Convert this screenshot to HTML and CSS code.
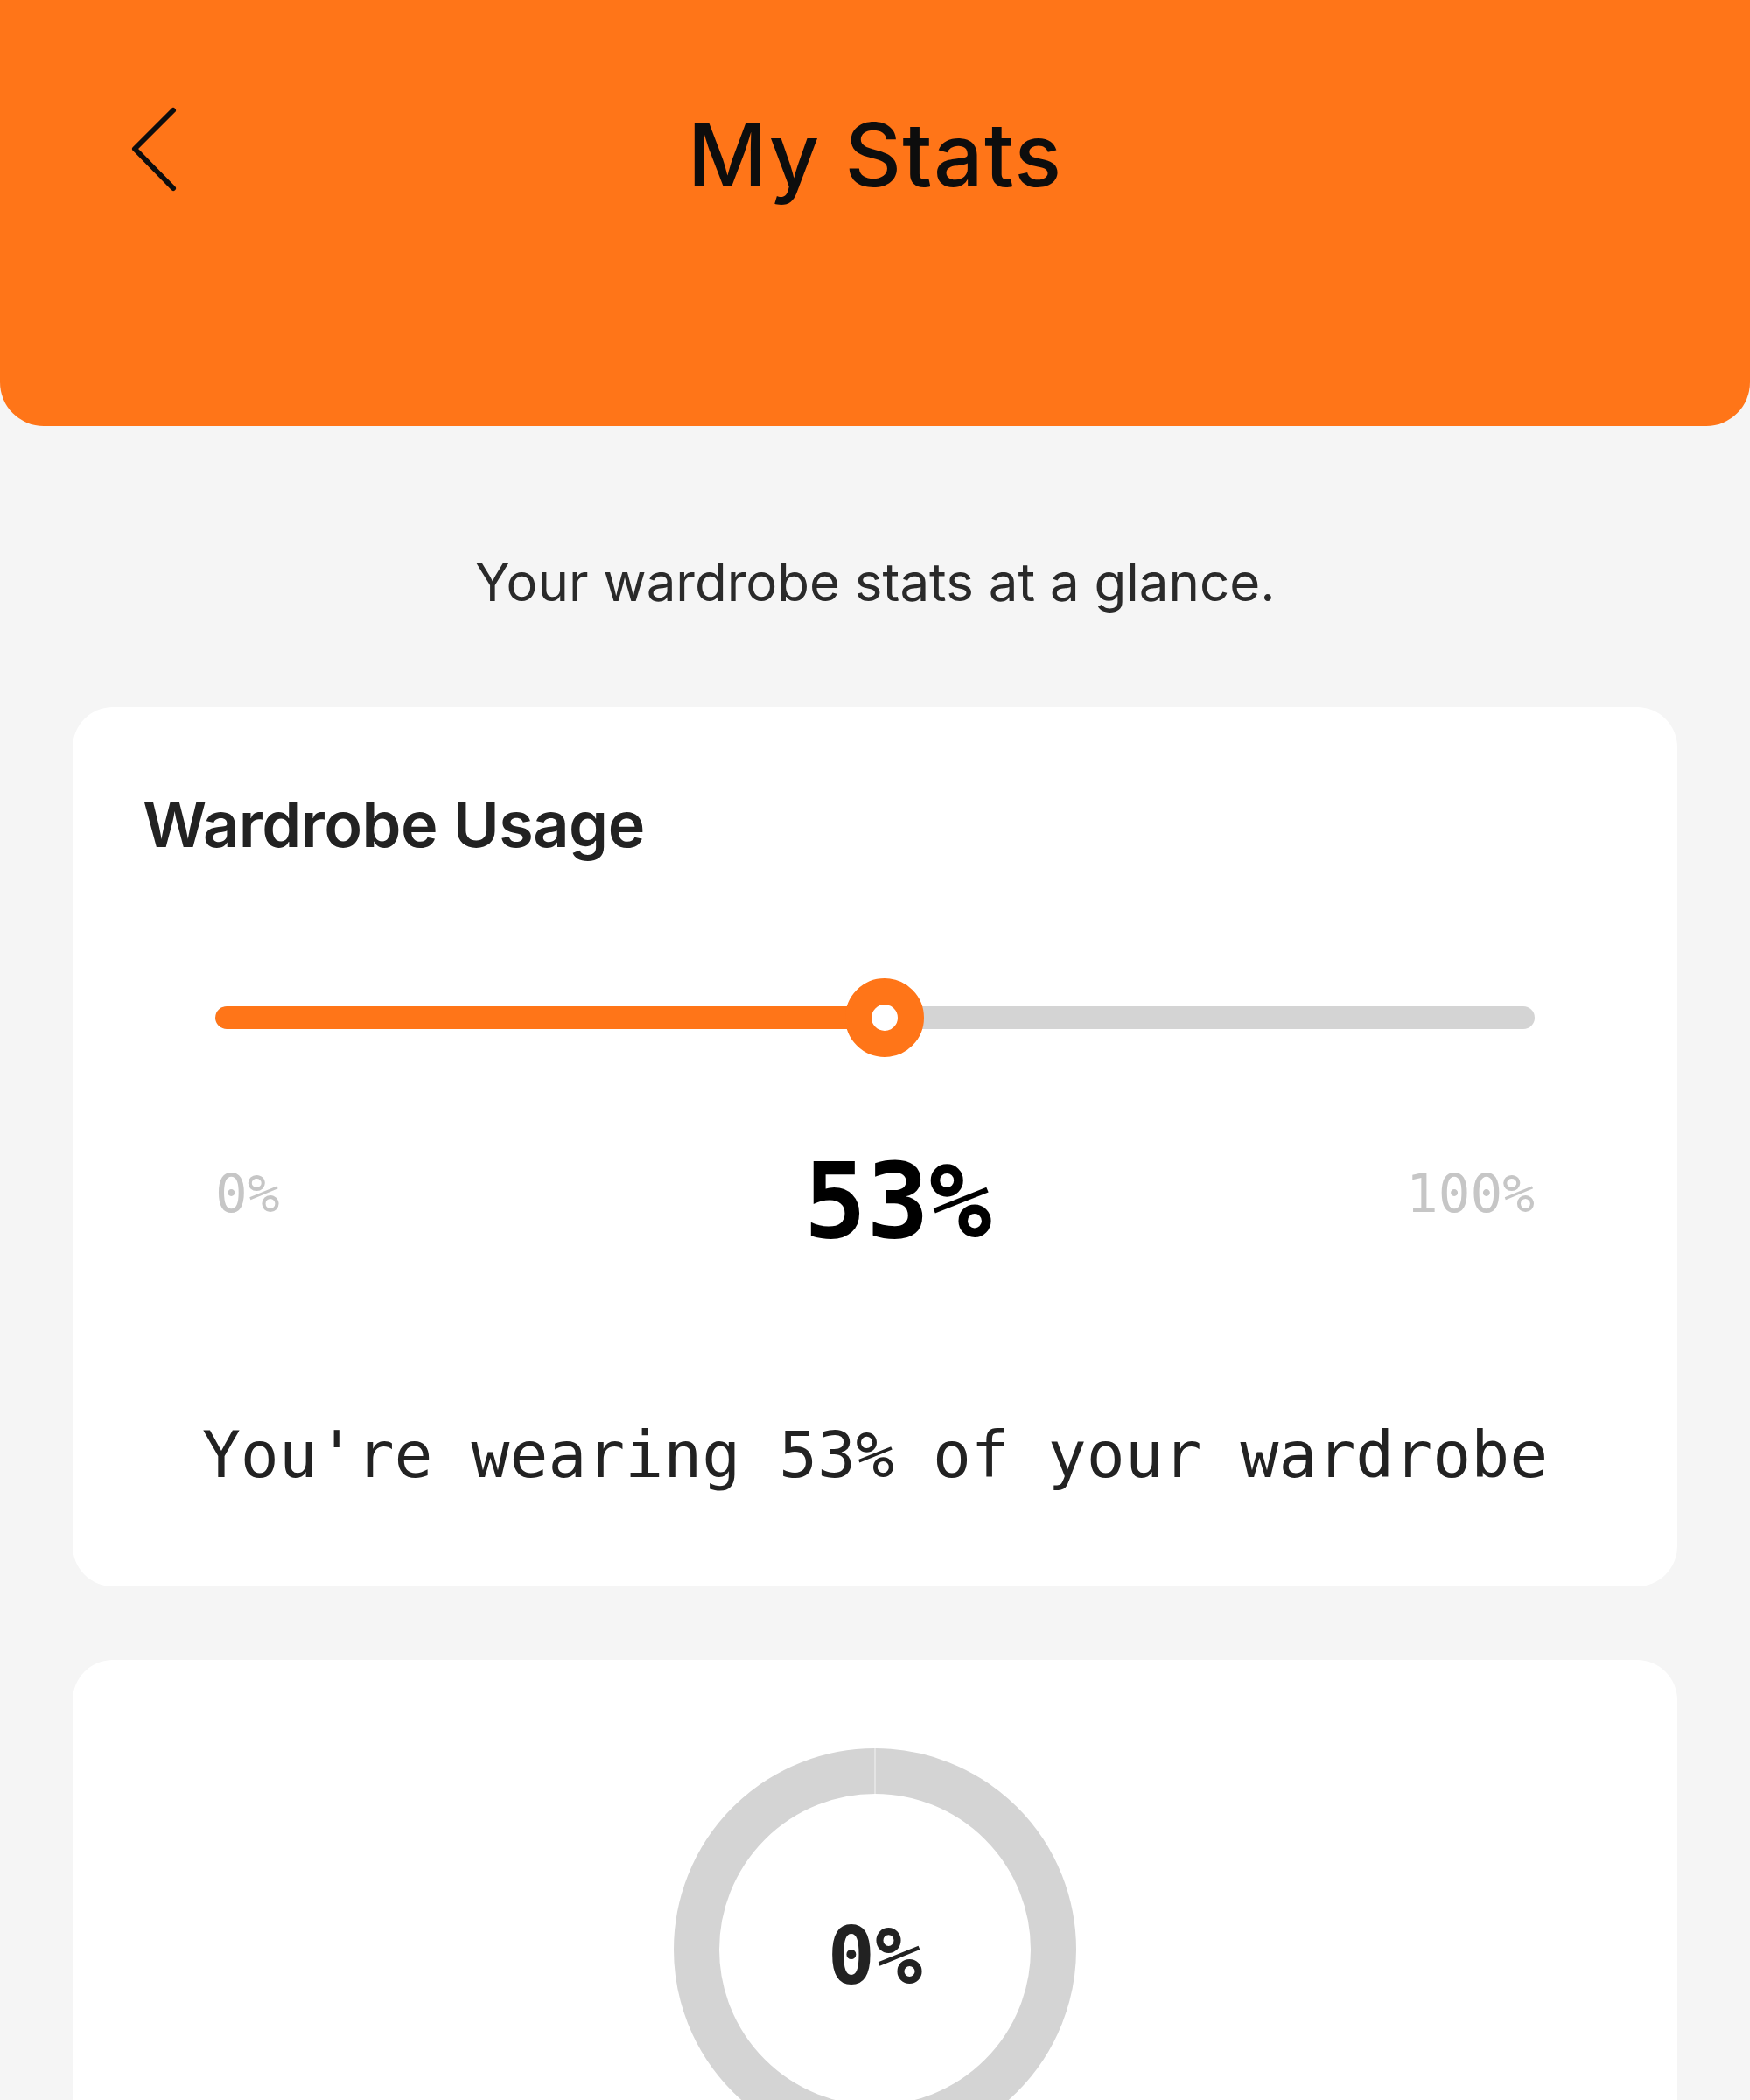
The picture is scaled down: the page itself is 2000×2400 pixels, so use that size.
FILE: index.html
```html
<!DOCTYPE html>
<html lang="en">
<head>
<meta charset="utf-8">
<title>My Stats</title>
<link rel="stylesheet" href="styles.css">
</head>
<body>
  <header class="app-header">
    <div class="header-bar">
      <button class="back-btn" aria-label="Back">
        <svg width="60" height="100" viewBox="0 0 60 100" fill="none">
          <path d="M52 6 L8 50 L52 95" stroke="#0d0d0d" stroke-width="6" stroke-linecap="round" stroke-linejoin="round"/>
        </svg>
      </button>
      <h1 class="page-title">My Stats</h1>
      <span class="spacer"></span>
    </div>
  </header>

  <main class="content">
    <p class="subtitle">Your wardrobe stats at a glance.</p>

    <section class="card usage-card">
      <h2 class="card-title">Wardrobe Usage</h2>
      <div class="slider">
        <div class="track">
          <div class="fill" style="width: 50.7%"></div>
        </div>
        <div class="thumb" style="left: 50.7%"></div>
      </div>
      <div class="range-row">
        <span class="range-end">0%</span>
        <span class="range-value">53%</span>
        <span class="range-end end-right">100%</span>
      </div>
      <p class="usage-text">You're wearing 53% of your wardrobe</p>
    </section>

    <section class="card donut-card">
      <div class="donut">
        <svg width="460" height="460" viewBox="0 0 460 460">
          <circle cx="230" cy="230" r="204" fill="none" stroke="#d4d4d4" stroke-width="52"/>
          <line x1="230" y1="0" x2="230" y2="52" stroke="#e4e4e4" stroke-width="2"/>
        </svg>
        <span class="donut-label">0%</span>
      </div>
    </section>
  </main>
</body>
</html>
```

FILE: styles.css
```css
* { box-sizing: border-box; }

body {
  margin: 0;
  background: #f5f5f5;
  font-family: Inter, "Noto Sans", "Liberation Sans", sans-serif;
  color: #1f1f1f;
}

.app-header {
  height: 487px;
  background: #ff7518;
  border-radius: 0 0 50px 50px;
  padding-top: 120px;
}

.header-bar {
  display: grid;
  grid-template-columns: 1fr auto 1fr;
  align-items: start;
}

.back-btn {
  justify-self: start;
  margin-left: 146px;
  padding: 0;
  border: 0;
  background: none;
  display: block;
  line-height: 0;
}

.page-title {
  margin: 7px 0 0;
  font-size: 100px;
  line-height: 1;
  font-weight: 500;
  color: #0d0d0d;
  letter-spacing: 1.2px;
}

.content {
  padding: 0 83px;
}

.subtitle {
  margin: 148px 0 0;
  text-align: center;
  font-size: 60px;
  line-height: 1;
  font-weight: 400;
  color: #2a2a2a;
  letter-spacing: 0;
}

.card {
  background: #ffffff;
  border-radius: 46px;
}

.usage-card {
  margin-top: 113px;
  padding: 98px 80px 114px;
}

.card-title {
  margin: 0;
  font-size: 72px;
  line-height: 1;
  font-weight: 600;
  color: #222222;
  letter-spacing: -0.5px;
}

.slider {
  position: relative;
  margin: 140px 83px 0;
  height: 90px;
  display: flex;
  align-items: center;
}

.track {
  width: 100%;
  height: 26px;
  border-radius: 13px;
  background: #d4d4d4;
  overflow: hidden;
}

.fill {
  height: 100%;
  background: #ff7518;
  border-radius: 13px;
}

.thumb {
  position: absolute;
  top: 0;
  width: 90px;
  height: 90px;
  margin-left: -45px;
  border-radius: 50%;
  background: #ffffff;
  border: 30px solid #ff7518;
}

.range-row {
  margin: 106px 83px 0;
  display: grid;
  grid-template-columns: 1fr auto 1fr;
  align-items: center;
  font-family: "DejaVu Sans Mono", "Liberation Mono", monospace;
}

.range-end {
  font-size: 61px;
  line-height: 1;
  color: #c6c6c6;
  margin-bottom: 20px;
}

.end-right {
  justify-self: end;
}

.range-value {
  font-size: 119px;
  line-height: 1;
  font-weight: 700;
  color: #000000;
  margin-left: 52px;
}

.usage-text {
  margin: 193px 0 0;
  text-align: center;
  font-family: "DejaVu Sans Mono", "Liberation Mono", monospace;
  font-size: 73px;
  line-height: 1;
  color: #222222;
  white-space: nowrap;
}

.donut-card {
  margin-top: 84px;
  padding: 101px 80px 120px;
  display: flex;
  justify-content: center;
}

.donut {
  display: grid;
  place-items: center;
}

.donut > * {
  grid-area: 1 / 1;
}

.donut svg {
  display: block;
}

.donut-label {
  font-family: "DejaVu Sans Mono", "Liberation Mono", monospace;
  font-size: 90px;
  line-height: 1;
  font-weight: 700;
  color: #222222;
  margin-top: 16px;
}
```
